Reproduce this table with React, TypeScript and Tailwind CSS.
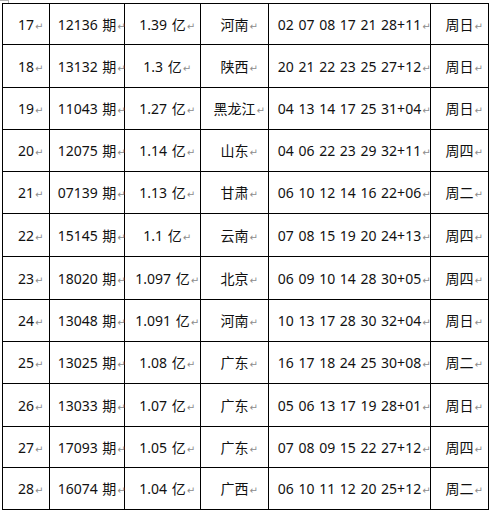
const rows = [
  ["17", "12136 期", "1.39 亿", "河南", "02 07 08 17 21 28+11", "周日"],
  ["18", "13132 期", "1.3 亿", "陕西", "20 21 22 23 25 27+12", "周日"],
  ["19", "11043 期", "1.27 亿", "黑龙江", "04 13 14 17 25 31+04", "周日"],
  ["20", "12075 期", "1.14 亿", "山东", "04 06 22 23 29 32+11", "周四"],
  ["21", "07139 期", "1.13 亿", "甘肃", "06 10 12 14 16 22+06", "周二"],
  ["22", "15145 期", "1.1 亿", "云南", "07 08 15 19 20 24+13", "周四"],
  ["23", "18020 期", "1.097 亿", "北京", "06 09 10 14 28 30+05", "周四"],
  ["24", "13048 期", "1.091 亿", "河南", "10 13 17 28 30 32+04", "周日"],
  ["25", "13025 期", "1.08 亿", "广东", "16 17 18 24 25 30+08", "周二"],
  ["26", "13033 期", "1.07 亿", "广东", "05 06 13 17 19 28+01", "周日"],
  ["27", "17093 期", "1.05 亿", "广东", "07 08 09 15 22 27+12", "周四"],
  ["28", "16074 期", "1.04 亿", "广西", "06 10 11 12 20 25+12", "周二"],
];

// row heights measured from the ruled lines (each includes its bottom border)
const heights = [
  "h-[41px]", "h-[43px]", "h-[42px]", "h-[42px]", "h-[42px]", "h-[43px]",
  "h-[43px]", "h-[42px]", "h-[42px]", "h-[43px]", "h-[41px]", "h-[42px]",
];

const widths = ["w-[47px]", "w-[75px]", "w-[76px]", "w-[68px]", "w-[162px]", "w-[58px]"];

function Cell({ text, width }: { text: string; width: string }) {
  return (
    <div className={`${width} shrink-0 border-r border-black flex items-center justify-center`}>
      <span className="relative whitespace-nowrap">
        {text}
        {/* paragraph mark */}
        <span className="absolute left-full bottom-[3px] ml-[1px] text-[10px] leading-none text-[#8c8c8c] font-['DejaVu_Sans',sans-serif]">
          ↵
        </span>
      </span>
    </div>
  );
}

export default function App() {
  return (
    <div className="relative w-[491px] h-[513px] bg-white overflow-hidden font-['Noto_Sans','Noto_Sans_CJK_SC',sans-serif] text-[14px] [word-spacing:1px] text-[#111]">
      {/* table corner marker */}
      <div className="absolute left-0 top-0 w-[9px] h-[3px] border-t border-r border-[#b0b0b0]" />

      <div className="ml-[2px] pt-[3px]">
        <div className="w-[487px] border-t border-l border-black">
          {rows.map((row, i) => (
            <div key={row[0]} className={`${heights[i]} flex border-b border-black`}>
              {row.map((text, j) => (
                <Cell key={j} text={text} width={widths[j]} />
              ))}
            </div>
          ))}
        </div>
      </div>
    </div>
  );
}
